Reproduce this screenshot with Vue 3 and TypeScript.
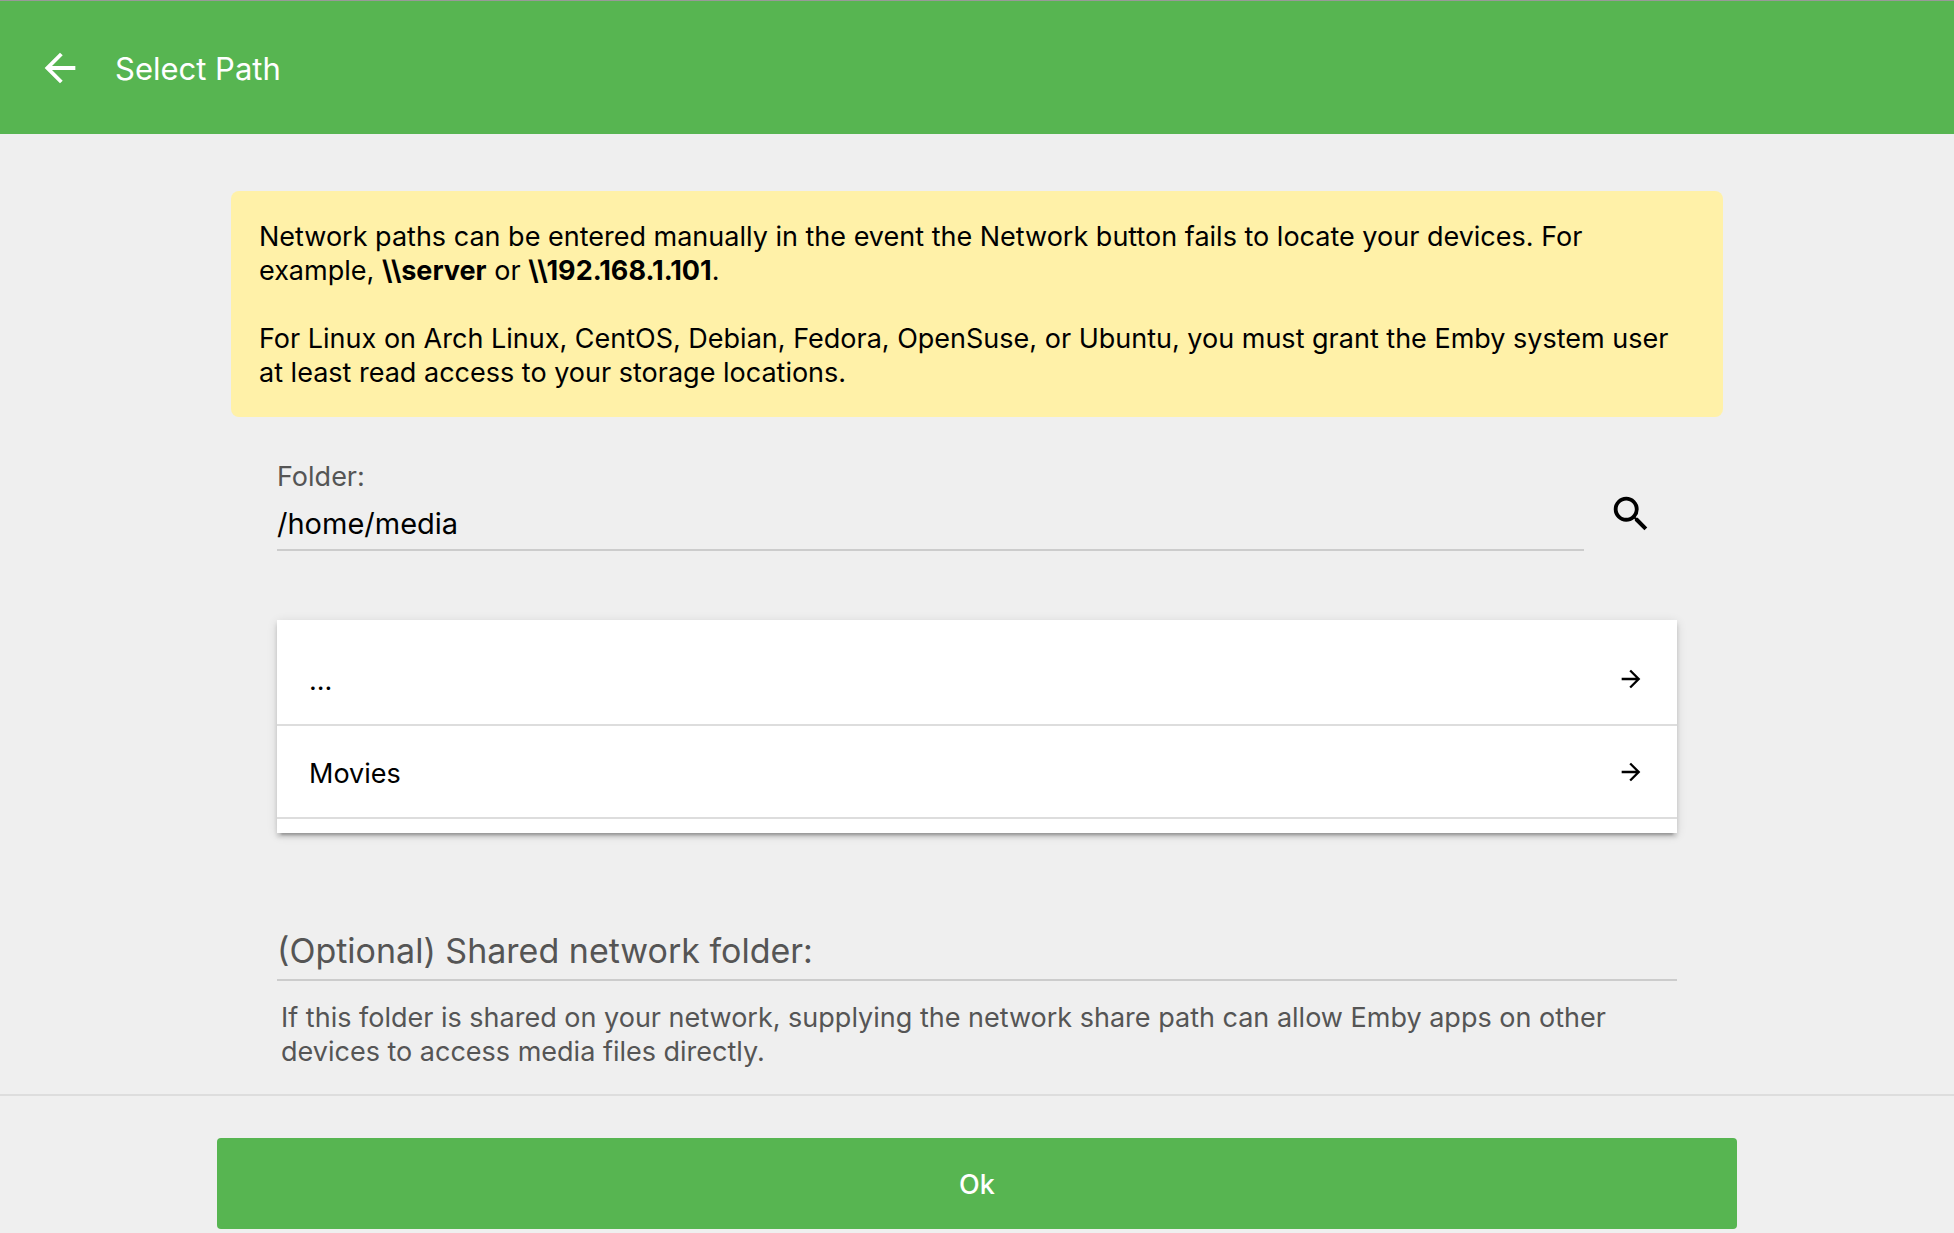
<script setup lang="ts">
import { ref } from 'vue'

interface FolderEntry {
  name: string
  path: string
}

const folder = ref('/home/media')
const networkFolder = ref('')
const entries: FolderEntry[] = [
  { name: '...', path: '/home' },
  { name: 'Movies', path: '/home/media/Movies' },
]

function open(entry: FolderEntry) {
  folder.value = entry.path
}
</script>

<template>
  <div class="dialog">
    <header class="header">
      <button type="button" class="icon-button" aria-label="Back">
        <svg class="icon" viewBox="0 0 24 24" aria-hidden="true">
          <path d="M20 11H7.83l5.59-5.59L12 4l-8 8 8 8 1.41-1.41L7.83 13H20v-2z" />
        </svg>
      </button>
      <h1 class="title">Select Path</h1>
    </header>

    <main class="content">
      <section class="notice">
        <p>
          Network paths can be entered manually in the event the Network button fails to locate your
          devices. For example, <b>\\server</b> or <b>\\192.168.1.101</b>.
        </p>
        <p>
          For Linux on Arch Linux, CentOS, Debian, Fedora, OpenSuse, or Ubuntu, you must grant the
          Emby system user at least read access to your storage locations.
        </p>
      </section>

      <form id="path-form" class="form" @submit.prevent>
        <div class="folder-row">
          <div class="field">
            <label class="label" for="folder">Folder:</label>
            <input id="folder" v-model="folder" class="input" type="text" />
          </div>
          <button type="button" class="icon-button search" aria-label="Search">
            <svg class="icon" viewBox="0 0 24 24" aria-hidden="true">
              <path
                d="M15.5 14h-.79l-.28-.27A6.471 6.471 0 0 0 16 9.5 6.5 6.5 0 1 0 9.5 16c1.61 0 3.09-.59 4.23-1.57l.27.28v.79l5 4.99L20.49 19l-4.99-5zm-6 0C7.01 14 5 11.99 5 9.5S7.01 5 9.5 5 14 7.01 14 9.5 11.99 14 9.5 14z"
              />
            </svg>
          </button>
        </div>

        <ul class="list">
          <li v-for="entry in entries" :key="entry.name" class="item">
            <button type="button" class="entry" @click="open(entry)">
              <span class="name">{{ entry.name }}</span>
              <svg class="arrow" viewBox="0 0 24 24" aria-hidden="true">
                <path d="M12 4l-1.41 1.41L16.17 11H4v2h12.17l-5.58 5.59L12 20l8-8z" />
              </svg>
            </button>
          </li>
        </ul>

        <div class="field network">
          <label class="placeholder" :class="{ hidden: networkFolder }" for="network">
            (Optional) Shared network folder:
          </label>
          <input
            id="network"
            v-model="networkFolder"
            class="input"
            type="text"
            aria-describedby="network-help"
          />
        </div>
        <p id="network-help" class="help">
          If this folder is shared on your network, supplying the network share path can allow Emby
          apps on other devices to access media files directly.
        </p>
      </form>
    </main>

    <footer class="footer">
      <button type="submit" form="path-form" class="submit">Ok</button>
    </footer>
  </div>
</template>

<style>
body {
  margin: 0;
  background: #efefef;
}
</style>

<style scoped>
.dialog {
  display: flex;
  flex-direction: column;
  min-height: 100vh;
  box-sizing: border-box;
  border-top: 1px solid #999;
  background: #efefef;
  color: #000;
  font-family: Inter, 'Liberation Sans', sans-serif;
  font-size: 27px;
  line-height: 34px;
}

p,
h1,
ul {
  margin: 0;
  padding: 0;
}

button,
input {
  margin: 0;
  border: 0;
  background: none;
  color: inherit;
  font: inherit;
}

button {
  padding: 0;
  cursor: pointer;
}

.header {
  display: flex;
  align-items: center;
  gap: 9px;
  height: 133px;
  padding: 0 14px;
  background: #57b551;
  color: #fff;
}

.icon-button {
  display: flex;
  flex: none;
  align-items: center;
  justify-content: center;
  width: 92px;
  height: 92px;
}

.icon {
  width: 46px;
  height: 46px;
  fill: currentColor;
}

.title {
  padding-top: 2px;
  font-size: 31px;
  font-weight: 400;
}

.content {
  flex: 1;
  width: 100%;
  max-width: 1520px;
  box-sizing: border-box;
  margin: 0 auto;
  padding: 57px 0 25px;
}

.notice {
  margin: 0 14px;
  padding: 29px 28px 27px;
  border-radius: 8px;
  background: #fff1a8;
}

.notice p + p {
  margin-top: 34px;
}

.form {
  padding: 43px 60px 0;
}

.folder-row {
  display: flex;
  align-items: flex-end;
}

.field {
  display: flex;
  flex: 1;
  flex-direction: column;
  min-width: 0;
}

.label,
.help,
.placeholder {
  color: #555;
}

.input {
  width: 100%;
  height: 57px;
  box-sizing: border-box;
  padding: 4px 0 0;
  border-bottom: 2px solid #ccc;
  border-radius: 0;
  outline: none;
  font-size: 29px;
}

.search {
  width: 93px;
  height: 74px;
}

.list {
  margin-top: 69px;
  padding: 13px 0 14px;
  background: #fff;
  box-shadow:
    0 4px 4px 0 rgba(0, 0, 0, 0.14),
    0 6px 2px -4px rgba(0, 0, 0, 0.2),
    0 2px 10px 0 rgba(0, 0, 0, 0.12);
  list-style: none;
}

.item {
  border-bottom: 2px solid #ddd;
}

.entry {
  display: flex;
  align-items: center;
  justify-content: space-between;
  width: 100%;
  height: 91px;
  padding: 0 32px;
  text-align: left;
}

.name {
  padding-top: 4px;
}

.arrow {
  width: 28px;
  height: 28px;
  fill: currentColor;
}

.network {
  position: relative;
  margin-top: 91px;
}

.placeholder {
  position: absolute;
  bottom: 10px;
  left: 0;
  font-size: 34px;
  line-height: 40px;
  pointer-events: none;
}

.hidden {
  visibility: hidden;
}

.help {
  margin-top: 20px;
  padding: 0 4px;
}

.footer {
  display: flex;
  justify-content: center;
  padding: 42px 0 4px;
  border-top: 2px solid #ddd;
}

.submit {
  width: 100%;
  max-width: 1520px;
  height: 91px;
  padding-top: 3px;
  border-radius: 4px;
  background: #57b551;
  color: #fff;
  font-weight: 500;
}
</style>
